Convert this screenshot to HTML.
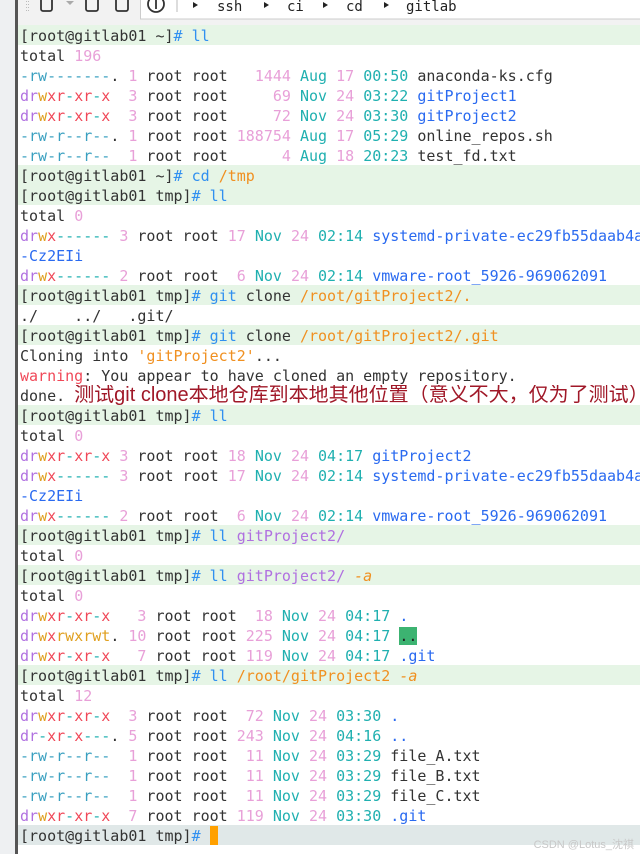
<!DOCTYPE html>
<html><head><meta charset="utf-8"><style>
body{margin:0;width:640px;height:854px;overflow:hidden;background:#fff;position:relative;font-family:"DejaVu Sans Mono","Liberation Mono",monospace;}
#strip{position:absolute;left:0;top:0;width:15px;height:854px;background:#eef0f2;}
#edge{position:absolute;left:15px;top:0;width:3px;height:854px;background:#555;}
#tb{position:absolute;left:0;top:0;width:640px;height:25px;}
#term{position:absolute;left:18px;top:25px;width:622px;height:829px;overflow:hidden;}
.l{height:20px;line-height:22px;font-size:15px;white-space:pre;padding-left:2px;color:#333;overflow:hidden;}
.p{background:#e6f5e6;}
.last{background:#e0e8e8;}
.d{color:#b070e0}.w{color:#e0a020}.x{color:#f04858}.h{color:#20b0b0}.n{color:#e8a0d8}.m{color:#20b0b0}.b{color:#2a6af0}.o{color:#f09020}.c{color:#3090f0}.g{color:#3090f0}.rw{color:#3aa0c0}
.ann{font-family:"Liberation Sans","Noto Sans CJK SC",sans-serif;font-size:20px;color:#a01828;}
</style></head><body>
<div id="strip"></div><div id="edge"></div>
<svg id="tb" width="640" height="25">
<rect x="18" y="0" width="622" height="25" fill="#f2f2f2"/>
<rect x="140.5" y="-1" width="500" height="20" fill="#fff" stroke="#ccc"/>
<g fill="#bbb"><rect x="26" y="1" width="1" height="1"/><rect x="28" y="1" width="1" height="1"/><rect x="26" y="4" width="1" height="1"/><rect x="28" y="4" width="1" height="1"/><rect x="26" y="7" width="1" height="1"/><rect x="28" y="7" width="1" height="1"/><rect x="26" y="10" width="1" height="1"/><rect x="28" y="10" width="1" height="1"/></g>
<g fill="none" stroke="#333" stroke-width="1.8">
<path d="M41 -2 V9 a2 2 0 0 0 2 2 H50 a2 2 0 0 0 2-2 V-2"/>
<path d="M86 -2 V9 a2 2 0 0 0 2 2 H96 a2 2 0 0 0 2-2 V-2"/>
<path d="M116 -2 V9 a2 2 0 0 0 2 2 H126 a2 2 0 0 0 2-2 V-2"/>
<circle cx="156" cy="4" r="8"/><path d="M156 0 V9"/>
</g>
<path d="M66 1 L74 1 L70 5 Z" fill="#aaa"/>
<line x1="177" y1="0" x2="177" y2="12" stroke="#bbb"/>
<g fill="#222"><path d="M193 2 l5 3 l-5 3z"/><path d="M264 2 l5 3 l-5 3z"/><path d="M323 2 l5 3 l-5 3z"/><path d="M384 2 l5 3 l-5 3z"/></g>
<g font-family="DejaVu Sans Mono,monospace" font-size="14" fill="#222"><text x="217" y="11">ssh</text><text x="287" y="11">ci</text><text x="346" y="11">cd</text><text x="406" y="11">gitlab</text></g>
</svg>
<div id="term">
<div class="l p">[root@gitlab01 ~]<span class="g">#</span> <span class="c">ll</span></div>
<div class="l">total <span class="n">196</span></div>
<div class="l"><span class="rw">-rw-------</span>. <span class="n">1</span> root root   <span class="n">1444</span> <span class="m">Aug</span> <span class="n">17</span> <span class="m">00:50</span> anaconda-ks.cfg</div>
<div class="l"><span class="d">dr</span><span class="w">w</span><span class="x">xr</span><span class="h">-</span><span class="x">xr</span><span class="h">-</span><span class="x">x</span>  <span class="n">3</span> root root     <span class="n">69</span> <span class="m">Nov</span> <span class="n">24</span> <span class="m">03:22</span> <span class="b">gitProject1</span></div>
<div class="l"><span class="d">dr</span><span class="w">w</span><span class="x">xr</span><span class="h">-</span><span class="x">xr</span><span class="h">-</span><span class="x">x</span>  <span class="n">3</span> root root     <span class="n">72</span> <span class="m">Nov</span> <span class="n">24</span> <span class="m">03:30</span> <span class="b">gitProject2</span></div>
<div class="l"><span class="rw">-rw-r--r--</span>. <span class="n">1</span> root root <span class="n">188754</span> <span class="m">Aug</span> <span class="n">17</span> <span class="m">05:29</span> online_repos.sh</div>
<div class="l"><span class="rw">-rw-r--r--</span>  <span class="n">1</span> root root      <span class="n">4</span> <span class="m">Aug</span> <span class="n">18</span> <span class="m">20:23</span> test_fd.txt</div>
<div class="l p">[root@gitlab01 ~]<span class="g">#</span> <span class="c">cd</span> <span class="o">/tmp</span></div>
<div class="l p">[root@gitlab01 tmp]<span class="g">#</span> <span class="c">ll</span></div>
<div class="l">total <span class="n">0</span></div>
<div class="l"><span class="d">dr</span><span class="w">w</span><span class="x">x</span><span class="h">------</span> <span class="n">3</span> root root <span class="n">17</span> <span class="m">Nov</span> <span class="n">24</span> <span class="m">02:14</span> <span class="b">systemd-private-ec29fb55daab4a</span></div>
<div class="l"><span class="b">-Cz2EIi</span></div>
<div class="l"><span class="d">dr</span><span class="w">w</span><span class="x">x</span><span class="h">------</span> <span class="n">2</span> root root  <span class="n">6</span> <span class="m">Nov</span> <span class="n">24</span> <span class="m">02:14</span> <span class="b">vmware-root_5926-969062091</span></div>
<div class="l p">[root@gitlab01 tmp]<span class="g">#</span> <span class="c">git</span> clone <span class="o">/root/gitProject2/.</span></div>
<div class="l">./    ../   .git/</div>
<div class="l p">[root@gitlab01 tmp]<span class="g">#</span> <span class="c">git</span> clone <span class="o">/root/gitProject2/.git</span></div>
<div class="l">Cloning into <span class="o">'gitProject2'</span>...</div>
<div class="l"><span class="x">warning</span>: You appear to have cloned an empty repository.</div>
<div class="l" style="line-height:20px">done. <span class="ann">测试git clone本地仓库到本地其他位置（意义不大，仅为了测试）</span></div>
<div class="l p">[root@gitlab01 tmp]<span class="g">#</span> <span class="c">ll</span></div>
<div class="l">total <span class="n">0</span></div>
<div class="l"><span class="d">dr</span><span class="w">w</span><span class="x">xr</span><span class="h">-</span><span class="x">xr</span><span class="h">-</span><span class="x">x</span> <span class="n">3</span> root root <span class="n">18</span> <span class="m">Nov</span> <span class="n">24</span> <span class="m">04:17</span> <span class="b">gitProject2</span></div>
<div class="l"><span class="d">dr</span><span class="w">w</span><span class="x">x</span><span class="h">------</span> <span class="n">3</span> root root <span class="n">17</span> <span class="m">Nov</span> <span class="n">24</span> <span class="m">02:14</span> <span class="b">systemd-private-ec29fb55daab4a</span></div>
<div class="l"><span class="b">-Cz2EIi</span></div>
<div class="l"><span class="d">dr</span><span class="w">w</span><span class="x">x</span><span class="h">------</span> <span class="n">2</span> root root  <span class="n">6</span> <span class="m">Nov</span> <span class="n">24</span> <span class="m">02:14</span> <span class="b">vmware-root_5926-969062091</span></div>
<div class="l p">[root@gitlab01 tmp]<span class="g">#</span> <span class="c">ll</span> <span class="d">gitProject2/</span></div>
<div class="l">total <span class="n">0</span></div>
<div class="l p">[root@gitlab01 tmp]<span class="g">#</span> <span class="c">ll</span> <span class="d">gitProject2/</span> <span class="o"><i>-a</i></span></div>
<div class="l">total <span class="n">0</span></div>
<div class="l"><span class="d">dr</span><span class="w">w</span><span class="x">xr</span><span class="h">-</span><span class="x">xr</span><span class="h">-</span><span class="x">x</span>   <span class="n">3</span> root root  <span class="n">18</span> <span class="m">Nov</span> <span class="n">24</span> <span class="m">04:17</span> <span class="b">.</span></div>
<div class="l"><span class="d">dr</span><span class="w">w</span><span class="x">x</span><span class="w">rwxrwt</span>. <span class="n">10</span> root root <span class="n">225</span> <span class="m">Nov</span> <span class="n">24</span> <span class="m">04:17</span> <span style="background:#3cb371;color:#222">..</span></div>
<div class="l"><span class="d">dr</span><span class="w">w</span><span class="x">xr</span><span class="h">-</span><span class="x">xr</span><span class="h">-</span><span class="x">x</span>   <span class="n">7</span> root root <span class="n">119</span> <span class="m">Nov</span> <span class="n">24</span> <span class="m">04:17</span> <span class="b">.git</span></div>
<div class="l p">[root@gitlab01 tmp]<span class="g">#</span> <span class="c">ll</span> <span class="o">/root/gitProject2</span> <span class="o"><i>-a</i></span></div>
<div class="l">total <span class="n">12</span></div>
<div class="l"><span class="d">dr</span><span class="w">w</span><span class="x">xr</span><span class="h">-</span><span class="x">xr</span><span class="h">-</span><span class="x">x</span>  <span class="n">3</span> root root  <span class="n">72</span> <span class="m">Nov</span> <span class="n">24</span> <span class="m">03:30</span> <span class="b">.</span></div>
<div class="l"><span class="d">dr</span><span class="h">-</span><span class="x">xr</span><span class="h">-</span><span class="x">x</span><span class="h">---</span>. <span class="n">5</span> root root <span class="n">243</span> <span class="m">Nov</span> <span class="n">24</span> <span class="m">04:16</span> <span class="b">..</span></div>
<div class="l"><span class="rw">-rw-r--r--</span>  <span class="n">1</span> root root  <span class="n">11</span> <span class="m">Nov</span> <span class="n">24</span> <span class="m">03:29</span> file_A.txt</div>
<div class="l"><span class="rw">-rw-r--r--</span>  <span class="n">1</span> root root  <span class="n">11</span> <span class="m">Nov</span> <span class="n">24</span> <span class="m">03:29</span> file_B.txt</div>
<div class="l"><span class="rw">-rw-r--r--</span>  <span class="n">1</span> root root  <span class="n">11</span> <span class="m">Nov</span> <span class="n">24</span> <span class="m">03:29</span> file_C.txt</div>
<div class="l"><span class="d">dr</span><span class="w">w</span><span class="x">xr</span><span class="h">-</span><span class="x">xr</span><span class="h">-</span><span class="x">x</span>  <span class="n">7</span> root root <span class="n">119</span> <span class="m">Nov</span> <span class="n">24</span> <span class="m">03:30</span> <span class="b">.git</span></div>
<div class="l last">[root@gitlab01 tmp]<span class="g">#</span> <span style="display:inline-block;width:8px;height:19px;background:#ffa000;vertical-align:top;margin-top:1px"></span></div>
</div>
<div style="position:absolute;right:6px;top:836px;font-family:'Liberation Sans','Noto Sans CJK SC',sans-serif;font-size:11px;color:#c8c8c8;">CSDN @Lotus_沈祺</div>
</body></html>
